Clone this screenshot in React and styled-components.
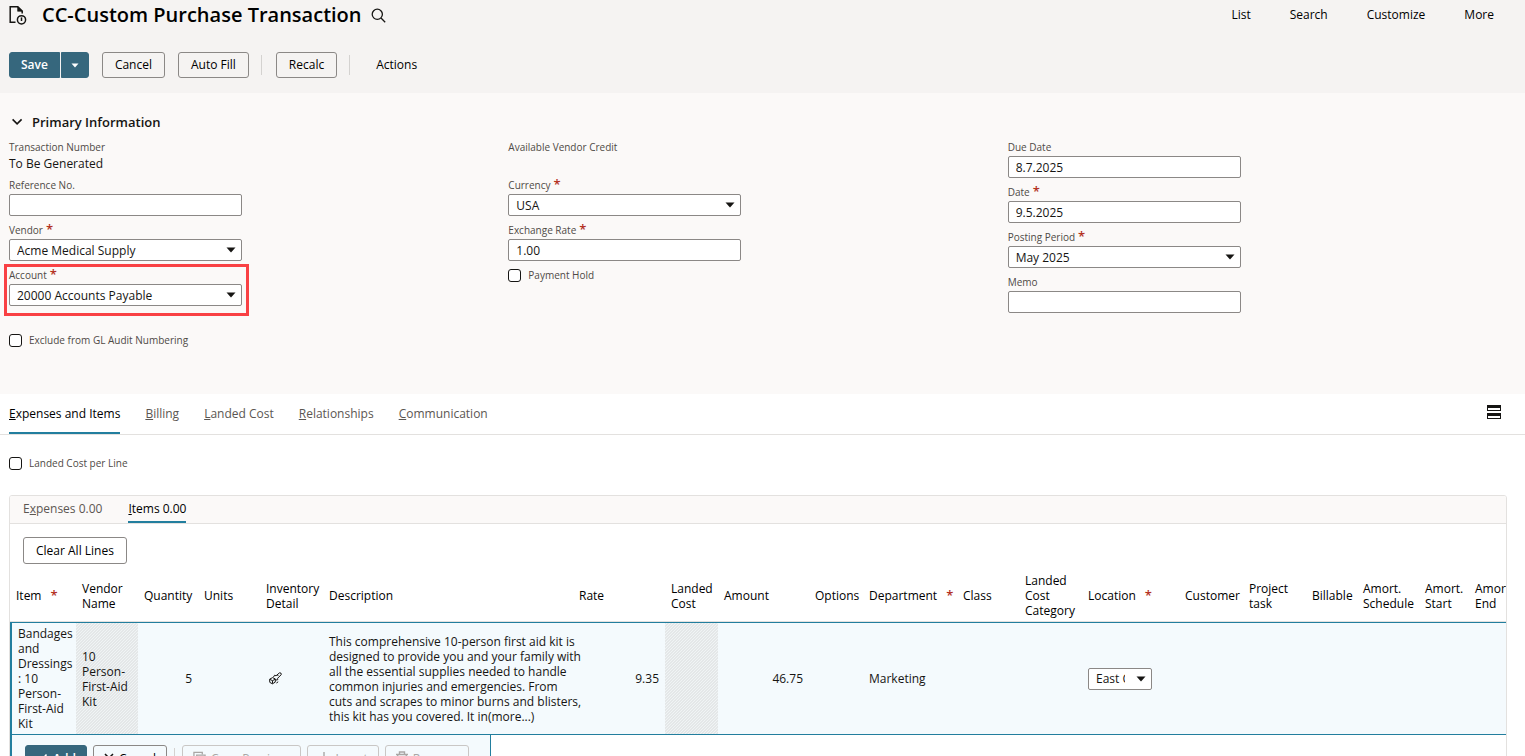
import styled, { createGlobalStyle, css } from "styled-components";

const GlobalStyle = createGlobalStyle`
  * {
    margin: 0;
    padding: 0;
    box-sizing: border-box;
  }

  body {
    background-color: #fff;
    color: #161513;
    font-family: "Open Sans", "Noto Sans", sans-serif;
    font-size: 12px;
    line-height: 15px;
  }

  button,
  input,
  select {
    font-family: inherit;
    font-size: 12px;
    color: #161513;
  }
`;

const Page = styled.div`
  height: 100vh;
  overflow: hidden;
`;

const Header = styled.header`
  background-color: #f5f3f2;
  padding: 2px 31px 15px 9px;
`;

const TitleRow = styled.div`
  display: flex;
  align-items: center;
  height: 26px;
`;

const Title = styled.h1`
  color: #000;
  font-size: 20px;
  font-weight: 600;
  line-height: 26px;
  margin: 0 9px 0 15px;
`;

const IconButton = styled.button`
  display: flex;
  border: 0;
  background: none;
`;

const TopNav = styled.nav`
  display: flex;
  gap: 39px;
  margin-left: auto;
  padding-bottom: 2px;
`;

const TopLink = styled.a`
  color: #000;
  font-weight: 500;
  text-decoration: none;
`;

const Toolbar = styled.div`
  display: flex;
  align-items: center;
  margin-top: 24px;
`;

const Button = styled.button`
  display: inline-flex;
  align-items: center;
  justify-content: center;
  gap: 6px;
  height: 26px;
  padding: 0 12px 1px;
  border: 1px solid #8b8886;
  border-radius: 3px;
  background-color: transparent;
  color: #000;
  font-weight: 500;
  white-space: nowrap;

  ${({ $primary }) =>
    $primary &&
    css`
      background-color: #36677d;
      border-color: #36677d;
      color: #fff;
      font-weight: 600;
    `}

  &:disabled {
    border-color: #c9c7c5;
    color: #a9a7a5;
  }
`;

const SplitButton = styled.div`
  display: flex;
  gap: 1px;
  margin-right: 13px;

  ${Button}:first-child {
    padding: 0 11px 1px;
    border-radius: 3px 0 0 3px;
  }

  ${Button}:last-child {
    width: 28px;
    padding: 0;
    border-radius: 0 3px 3px 0;
  }
`;

const ButtonGroup = styled.div`
  display: flex;
  gap: 13px;
`;

const Separator = styled.span`
  width: 1px;
  height: 20px;
  margin: 0 14px 0 12px;
  background-color: #d4d2d0;
`;

const TextButton = styled.button`
  border: 0;
  background: none;
  margin-left: 12px;
  padding-bottom: 1px;
  color: #000;
  font-weight: 500;
`;

const Primary = styled.section`
  background-color: #fbf9f8;
  padding: 20px 18px 46px 9px;
`;

const SectionTitle = styled.h2`
  display: flex;
  align-items: center;
  gap: 8px;
  height: 18px;
  font-size: 13px;
  font-weight: 600;
  line-height: 18px;
`;

const FieldGrid = styled.div`
  display: grid;
  grid-template-columns: repeat(3, 1fr);
  margin-top: 8px;
`;

const FieldColumn = styled.div`
  display: flex;
  flex-direction: column;
  gap: 6px;
  width: 233px;
`;

const Field = styled.div`
  position: relative;

  ${({ $highlight }) =>
    $highlight &&
    css`
      &::after {
        content: "";
        position: absolute;
        inset: -3px -7px -10px -5px;
        border: 3px solid #f94144;
        pointer-events: none;
      }
    `}
`;

const Label = styled.label`
  display: block;
  height: 16px;
  margin-bottom: 1px;
  color: #4f4a46;
  font-size: 10px;
  font-weight: 500;
  line-height: 16px;
`;

const ReadOnly = styled.div`
  height: 15px;
  line-height: 15px;
`;

const Star = styled.span`
  color: #b3311f;
  font-size: 13px;
  font-weight: 600;
  line-height: 10px;
  margin-left: ${({ $wide }) => ($wide ? "9px" : "3px")};
`;

const boxStyle = css`
  display: block;
  width: 100%;
  height: 22px;
  border: 1px solid #8b8886;
  border-radius: 2px;
  background-color: #fff;
`;

const TextInput = styled.input`
  ${boxStyle}
  padding: 0 7px;
`;

const SelectBox = styled.div`
  position: relative;
  width: ${({ $small }) => ($small ? "64px" : "100%")};
`;

const Select = styled.select`
  ${boxStyle}
  appearance: none;
  padding: 0 26px 0 7px;
`;

const SelectArrow = styled.svg`
  position: absolute;
  top: 8px;
  right: 6px;
  pointer-events: none;
`;

const CheckLabel = styled.label`
  display: flex;
  align-items: center;
  gap: 7px;
  height: 16px;
  color: #4f4a46;
  font-size: 10px;
  font-weight: 500;
  line-height: 16px;
  margin-top: ${({ $spaced }) => ($spaced ? "20px" : "0")};
`;

const Checkbox = styled.input`
  appearance: none;
  width: 13px;
  height: 13px;
  border: 1px solid #161513;
  border-radius: 3px;
  background-color: #fff;
`;

const Tabs = styled.div`
  display: flex;
  align-items: stretch;
  gap: 25px;
  height: 41px;
  padding: 0 24px 0 9px;
  border-bottom: 1px solid #e3e1df;
`;

const Tab = styled.button`
  height: 40px;
  border: 0;
  border-bottom: 2px solid ${({ $active }) => ($active ? "#227e9e" : "transparent")};
  background: none;
  color: ${({ $active }) => ($active ? "#000" : "#5b5652")};
  font-weight: 500;
`;

const LayoutButton = styled(IconButton)`
  align-self: center;
  margin: 0 0 4px auto;
`;

const Content = styled.main`
  padding: 20px 18px 0 9px;
`;

const Panel = styled.div`
  margin-top: 24px;
  border: 1px solid #e3e1df;
  border-radius: 3px 3px 0 0;
  overflow: hidden;
`;

const SubTabs = styled.div`
  display: flex;
  gap: 26px;
  height: 28px;
  padding: 0 13px;
  border-bottom: 1px solid #e3e1df;
  background-color: #fbf9f8;

  ${Tab} {
    height: 27px;
  }
`;

const PanelActions = styled.div`
  display: flex;
  padding: 13px 13px 7px;

  ${Button} {
    height: 27px;
  }
`;

const ItemsTable = styled.table`
  width: 1521px;
  table-layout: fixed;
  border-collapse: separate;
  border-spacing: 0;
`;

const Th = styled.th`
  height: 51px;
  padding: 0 6px 1px;
  border-bottom: 1px solid #e3e1df;
  color: #000;
  font-weight: 500;
  line-height: 15px;
  text-align: left;
  white-space: ${({ $wrap }) => ($wrap ? "normal" : "nowrap")};
`;

const Td = styled.td`
  height: 113px;
  padding: 0 6px;
  border-top: 1px solid #227e9e;
  border-bottom: 1px solid #227e9e;
  background-color: #f4fafd;
  line-height: 15px;
  text-align: ${({ $right }) => ($right ? "right" : "left")};
  vertical-align: middle;
  white-space: ${({ $nowrap }) => ($nowrap ? "nowrap" : "normal")};

  &:first-child {
    border-left: 2px solid #227e9e;
    padding-right: 0;
  }

  ${({ $hatched }) =>
    $hatched &&
    css`
      background-color: #f0f4f5;
      background-image: linear-gradient(
        135deg,
        #e4e7e8 25%,
        transparent 25%,
        transparent 50%,
        #e4e7e8 50%,
        #e4e7e8 75%,
        transparent 75%
      );
      background-size: 3px 3px;
    `}
`;

const LineActions = styled.div`
  display: flex;
  align-items: center;
  width: 481px;
  padding: 10px 13px;
  border-left: 2px solid #227e9e;
  border-right: 1px solid #227e9e;
  background-color: #f4fafd;

  ${Button} {
    gap: 5px;
    padding: 0 10px;
  }

  ${Separator} {
    margin: 0 7px;
  }
`;

const LineGroup = styled.div`
  display: flex;
  gap: 6px;
`;

const columns = [
  { name: "Item", width: 66, required: true },
  { name: "Vendor Name", width: 62, wrap: true },
  { name: "Quantity", width: 60 },
  { name: "Units", width: 62 },
  { name: "Inventory Detail", width: 63, wrap: true },
  { name: "Description", width: 250 },
  { name: "Rate", width: 92 },
  { name: "Landed Cost", width: 53, wrap: true },
  { name: "Amount", width: 91 },
  { name: "Options", width: 54 },
  { name: "Department", width: 94, required: true },
  { name: "Class", width: 62 },
  { name: "Landed Cost Category", width: 63, wrap: true },
  { name: "Location", width: 97, required: true },
  { name: "Customer", width: 64 },
  { name: "Project task", width: 63, wrap: true },
  { name: "Billable", width: 51 },
  { name: "Amort. Schedule", width: 62, wrap: true },
  { name: "Amort. Start", width: 50, wrap: true },
  { name: "Amort. End", width: 62, wrap: true },
];

const tabs = ["Expenses and Items", "Billing", "Landed Cost", "Relationships", "Communication"];

const Arrow = () => (
  <SelectArrow width="10" height="6" viewBox="0 0 10 6">
    <path d="M0.5 0.5h9L5 5.5z" fill="#161513" />
  </SelectArrow>
);

const TextField = ({ id, label, value = "", required }) => (
  <Field>
    <Label htmlFor={id}>
      {label}
      {required && <Star>*</Star>}
    </Label>
    <TextInput id={id} type="text" defaultValue={value} />
  </Field>
);

const SelectField = ({ id, label, value, required, highlight }) => (
  <Field $highlight={highlight}>
    <Label htmlFor={id}>
      {label}
      {required && <Star>*</Star>}
    </Label>
    <SelectBox>
      <Select id={id} defaultValue={value}>
        <option>{value}</option>
      </Select>
      <Arrow />
    </SelectBox>
  </Field>
);

const CheckField = ({ label, spaced }) => (
  <CheckLabel $spaced={spaced}>
    <Checkbox type="checkbox" />
    {label}
  </CheckLabel>
);

const DocumentIcon = () => (
  <svg width="18" height="20" viewBox="0 0 18 20" fill="none" stroke="#161513" strokeWidth="1.5">
    <path d="M6.5 17.2H1.2V1.7h7.6l4.4 4.4v2.4" />
    <path d="M8.6 1.5v4.8h4.8z" fill="#161513" strokeWidth="0.6" />
    <circle cx="12.5" cy="14.8" r="4.1" />
    <path d="M12.5 12.4v3.6" />
  </svg>
);

const SearchIcon = () => (
  <svg width="15" height="15" viewBox="0 0 15 15" fill="none" stroke="#161513" strokeWidth="1.3">
    <circle cx="6.3" cy="6.3" r="5.1" />
    <path d="M10 10l4.2 4.2" />
  </svg>
);

const ChevronIcon = () => (
  <svg width="15" height="10" viewBox="0 0 15 10" fill="none" stroke="#161513" strokeWidth="1.6">
    <path d="M3.6 2.4l4.5 4.5 4.5-4.5" />
  </svg>
);

const LayoutIcon = () => (
  <svg width="14" height="14" viewBox="0 0 14 14">
    <path fill="#161513" fillRule="evenodd" d="M0 0h14v6H0zM1 3v2h12V3zM0 8h14v6H0zM1 11v2h12v-2z" />
  </svg>
);

const DetailIcon = () => (
  <svg width="16" height="13" viewBox="-3 0 16 13" fill="none" stroke="#161513" strokeWidth="1">
    <path d="M.6 7.2l3-1.6 2.8 1.4-.2 3.2-2.8 1.6L.8 10.4zM1 7.4l2.5 1.3L6.2 7.2M3.5 8.6v3" />
    <path d="M4.4 5.2l1.2-2 1.4.6L10.4.9l1.6.2.2 1.6-3.6 3.6.2 1.4-2 .4M8.4 3l1 1" />
    <path d="M7.4 11l1.8-1.2" />
  </svg>
);

const CheckIcon = () => (
  <svg width="12" height="12" viewBox="0 0 12 12" fill="none" stroke="#fff" strokeWidth="1.6">
    <path d="M1.5 6.5l3 3 6-7" />
  </svg>
);

const CloseIcon = () => (
  <svg width="10" height="10" viewBox="0 0 10 10" fill="none" stroke="#161513" strokeWidth="1.5">
    <path d="M1 1l8 8M9 1L1 9" />
  </svg>
);

const CopyIcon = () => (
  <svg width="13" height="14" viewBox="0 0 14 14" fill="none" stroke="#a9a7a5" strokeWidth="1.4">
    <path d="M3 11H1V1h9v2M4 4h9v9H4z" />
  </svg>
);

const InsertIcon = () => (
  <svg width="12" height="12" viewBox="0 0 12 12" fill="none" stroke="#a9a7a5" strokeWidth="1.4">
    <path d="M6 0v12M0 6h12" />
  </svg>
);

const TrashIcon = () => (
  <svg width="12" height="14" viewBox="0 0 12 14" fill="none" stroke="#a9a7a5" strokeWidth="1.4">
    <path d="M0 3.5h12M3.5 3V1h5v2M1.7 4v9h8.6V4M4.5 6v5M7.5 6v5" />
  </svg>
);

const App = () => {
  return (
    <>
      <GlobalStyle />
      <Page>
        <Header>
          <TitleRow>
            <DocumentIcon />
            <Title>CC-Custom Purchase Transaction</Title>
            <IconButton aria-label="Search">
              <SearchIcon />
            </IconButton>
            <TopNav>
              {["List", "Search", "Customize", "More"].map((item) => (
                <TopLink key={item} href="#">
                  {item}
                </TopLink>
              ))}
            </TopNav>
          </TitleRow>
          <Toolbar>
            <SplitButton>
              <Button $primary>Save</Button>
              <Button $primary aria-label="Save options">
                <svg width="8" height="5" viewBox="0 0 8 5">
                  <path d="M0.5 0.5h7L4 4.5z" fill="#fff" />
                </svg>
              </Button>
            </SplitButton>
            <ButtonGroup>
              <Button>Cancel</Button>
              <Button>Auto Fill</Button>
            </ButtonGroup>
            <Separator />
            <Button>Recalc</Button>
            <Separator />
            <TextButton>Actions</TextButton>
          </Toolbar>
        </Header>

        <Primary>
          <SectionTitle>
            <ChevronIcon />
            Primary Information
          </SectionTitle>
          <FieldGrid>
            <FieldColumn>
              <Field>
                <Label as="div">Transaction Number</Label>
                <ReadOnly>To Be Generated</ReadOnly>
              </Field>
              <TextField id="reference" label="Reference No." />
              <SelectField id="vendor" label="Vendor" value="Acme Medical Supply" required />
              <SelectField id="account" label="Account" value="20000 Accounts Payable" required highlight />
              <CheckField label="Exclude from GL Audit Numbering" spaced />
            </FieldColumn>
            <FieldColumn>
              <Field>
                <Label as="div">Available Vendor Credit</Label>
                <ReadOnly />
              </Field>
              <SelectField id="currency" label="Currency" value="USA" required />
              <TextField id="rate" label="Exchange Rate" value="1.00" required />
              <CheckField label="Payment Hold" />
            </FieldColumn>
            <FieldColumn>
              <TextField id="dueDate" label="Due Date" value="8.7.2025" />
              <TextField id="date" label="Date" value="9.5.2025" required />
              <SelectField id="period" label="Posting Period" value="May 2025" required />
              <TextField id="memo" label="Memo" />
            </FieldColumn>
          </FieldGrid>
        </Primary>

        <Tabs>
          {tabs.map((tab, index) => (
            <Tab key={tab} $active={index === 0}>
              <u>{tab[0]}</u>
              {tab.slice(1)}
            </Tab>
          ))}
          <LayoutButton aria-label="Change layout">
            <LayoutIcon />
          </LayoutButton>
        </Tabs>

        <Content>
          <CheckField label="Landed Cost per Line" />
          <Panel>
            <SubTabs>
              <Tab>
                E<u>x</u>penses 0.00
              </Tab>
              <Tab $active>
                <u>I</u>tems 0.00
              </Tab>
            </SubTabs>
            <PanelActions>
              <Button>Clear All Lines</Button>
            </PanelActions>
            <ItemsTable>
              <colgroup>
                {columns.map((column) => (
                  <col key={column.name} style={{ width: column.width }} />
                ))}
              </colgroup>
              <thead>
                <tr>
                  {columns.map((column) => (
                    <Th key={column.name} $wrap={column.wrap}>
                      {column.name}
                      {column.required && <Star $wide>*</Star>}
                    </Th>
                  ))}
                </tr>
              </thead>
              <tbody>
                <tr>
                  <Td>Bandages and Dressings : 10 Person-First-Aid Kit</Td>
                  <Td $hatched>10 Person-First-Aid Kit</Td>
                  <Td $right>5</Td>
                  <Td />
                  <Td>
                    <IconButton aria-label="Inventory detail">
                      <DetailIcon />
                    </IconButton>
                  </Td>
                  <Td $nowrap>
                    This comprehensive 10-person first aid kit is
                    <br />
                    designed to provide you and your family with
                    <br />
                    all the essential supplies needed to handle
                    <br />
                    common injuries and emergencies. From
                    <br />
                    cuts and scrapes to minor burns and blisters,
                    <br />
                    this kit has you covered. It in(more...)
                  </Td>
                  <Td $right>9.35</Td>
                  <Td $hatched />
                  <Td $right>46.75</Td>
                  <Td />
                  <Td>Marketing</Td>
                  <Td />
                  <Td />
                  <Td>
                    <SelectBox $small>
                      <Select aria-label="Location" defaultValue="East Coast">
                        <option>East Coast</option>
                      </Select>
                      <Arrow />
                    </SelectBox>
                  </Td>
                  <Td />
                  <Td />
                  <Td />
                  <Td />
                  <Td />
                  <Td />
                </tr>
              </tbody>
            </ItemsTable>
            <LineActions>
              <LineGroup>
                <Button $primary>
                  <CheckIcon />
                  Add
                </Button>
                <Button>
                  <CloseIcon />
                  Cancel
                </Button>
              </LineGroup>
              <Separator />
              <LineGroup>
                <Button disabled>
                  <CopyIcon />
                  Copy Previous
                </Button>
                <Button disabled>
                  <InsertIcon />
                  Insert
                </Button>
                <Button disabled>
                  <TrashIcon />
                  Remove
                </Button>
              </LineGroup>
            </LineActions>
          </Panel>
        </Content>
      </Page>
    </>
  );
};

export default App;
